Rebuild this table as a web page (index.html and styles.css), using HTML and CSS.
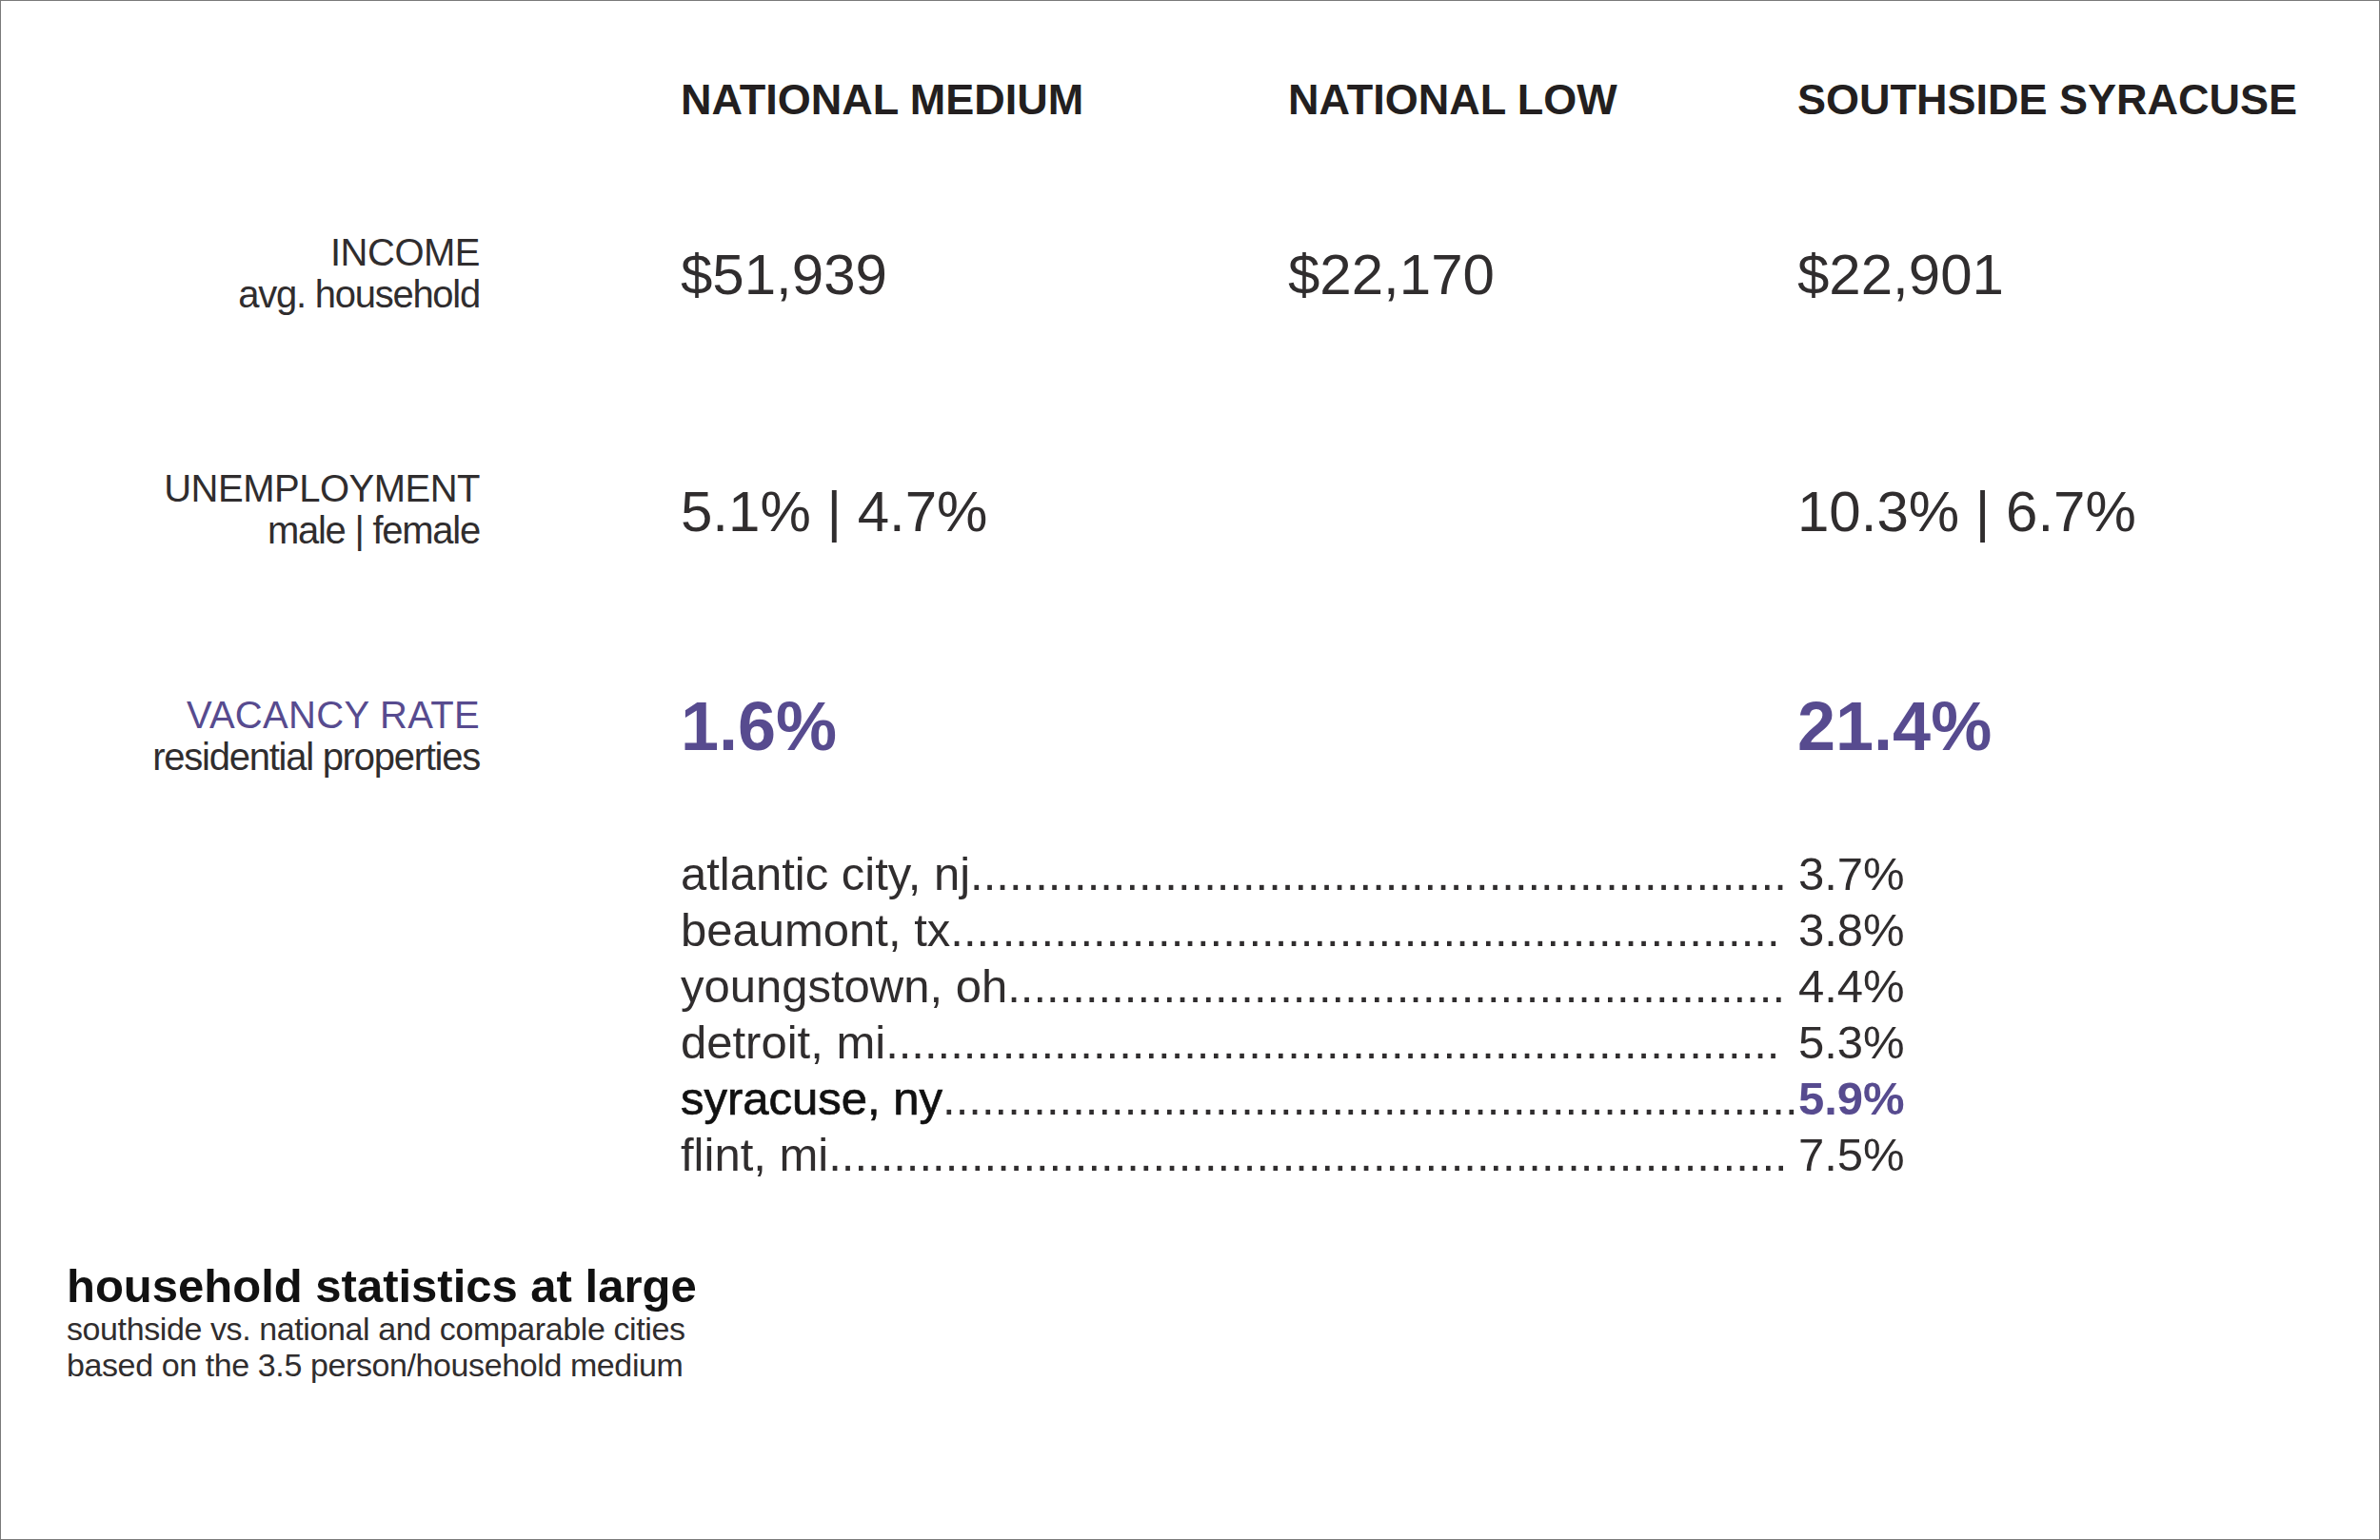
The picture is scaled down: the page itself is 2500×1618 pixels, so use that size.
FILE: index.html
```html
<!DOCTYPE html>
<html lang="en">
<head>
<meta charset="utf-8">
<title>household statistics at large</title>
<link rel="stylesheet" href="styles.css">
</head>
<body>
<div class="page">
  <div class="row head-row">
    <div></div>
    <h2 class="col-head">NATIONAL MEDIUM</h2>
    <h2 class="col-head">NATIONAL LOW</h2>
    <h2 class="col-head">SOUTHSIDE SYRACUSE</h2>
  </div>

  <div class="row stat-row row-income">
    <div class="label">
      <div class="label-title">INCOME</div>
      <div class="label-sub">avg. household</div>
    </div>
    <div class="value">$51,939</div>
    <div class="value">$22,170</div>
    <div class="value">$22,901</div>
  </div>

  <div class="row stat-row row-unemp">
    <div class="label">
      <div class="label-title">UNEMPLOYMENT</div>
      <div class="label-sub">male | female</div>
    </div>
    <div class="value">5.1% | 4.7%</div>
    <div class="value"></div>
    <div class="value">10.3% | 6.7%</div>
  </div>

  <div class="row stat-row row-vacancy">
    <div class="label">
      <div class="label-title accent">VACANCY RATE</div>
      <div class="label-sub">residential properties</div>
    </div>
    <div class="value value-big">1.6%</div>
    <div class="value value-big"></div>
    <div class="value value-big">21.4%</div>
  </div>

  <ul class="cities">
    <li class="city-row"><span class="city-name">atlantic city, nj</span><span class="dots"></span><span class="pct">3.7%</span></li>
    <li class="city-row"><span class="city-name">beaumont, tx</span><span class="dots"></span><span class="pct">3.8%</span></li>
    <li class="city-row"><span class="city-name">youngstown, oh</span><span class="dots"></span><span class="pct">4.4%</span></li>
    <li class="city-row"><span class="city-name">detroit, mi</span><span class="dots"></span><span class="pct">5.3%</span></li>
    <li class="city-row is-current"><span class="city-name">syracuse, ny</span><span class="dots"></span><span class="pct">5.9%</span></li>
    <li class="city-row"><span class="city-name">flint, mi</span><span class="dots"></span><span class="pct">7.5%</span></li>
  </ul>

  <div class="caption">
    <h1 class="caption-title">household statistics at large</h1>
    <p class="caption-sub">southside vs. national and comparable cities</p>
    <p class="caption-sub">based on the 3.5 person/household medium</p>
  </div>
</div>
</body>
</html>
```

FILE: styles.css
```css
html, body {
  margin: 0;
  padding: 0;
  background: #ffffff;
}

body {
  font-family: "Liberation Sans", Arial, Helvetica, sans-serif;
  color: #302d2e;
}

.page {
  box-sizing: border-box;
  width: 2500px;
  height: 1618px;
  border: 1px solid #7a7a7a;
  padding-top: 77px;
  overflow: hidden;
}

.row {
  display: grid;
  grid-template-columns: 714px 638px 535px 1fr;
  align-items: start;
}

/* column headings */
.col-head {
  margin: 0;
  font-size: 45px;
  line-height: 54px;
  font-weight: 700;
  color: #231f20;
  letter-spacing: 0;
  white-space: nowrap;
}

/* stat rows */
.row-income { margin-top: 111px; }
.row-unemp { margin-top: 160px; }
.row-vacancy { margin-top: 148px; }

.label {
  padding-right: 211px;
  text-align: right;
  font-size: 40px;
  line-height: 44px;
  white-space: nowrap;
}

.row-vacancy .label { margin-top: 2px; }

.label-title {
  letter-spacing: -0.5px;
}

.label-title.accent {
  letter-spacing: 0.3px;
}

.label-sub {
  letter-spacing: -1.25px;
}

.accent {
  color: #574b8f;
}

.value {
  margin-top: 16px;
  font-size: 60px;
  line-height: 60px;
  white-space: nowrap;
}

.row-unemp .value { margin-top: 17px; }

.value-big {
  margin-top: 0;
  font-size: 72px;
  line-height: 72px;
  font-weight: 700;
  color: #574b8f;
}

/* comparable cities list */
.cities {
  list-style: none;
  margin: 72px 0 0 714px;
  padding: 0;
  width: 1288px;
}

.city-row {
  display: flex;
  font-size: 49px;
  line-height: 59px;
  white-space: nowrap;
}

.city-name {
  flex: none;
}

.dots {
  flex: 1 1 0;
  min-width: 0;
  overflow: hidden;
  margin-right: 16px;
}

.dots::after {
  content: "........................................................................................................................................................................";
}

.pct {
  flex: none;
  width: 114px;
}

.is-current .city-name {
  color: #111111;
  -webkit-text-stroke: 0.7px #111111;
}

.is-current .dots {
  margin-right: 1px;
}

.is-current .pct {
  color: #574b8f;
  font-weight: 700;
}

/* caption */
.caption {
  margin: 82px 0 0 69px;
}

.caption-title {
  margin: 0;
  font-size: 49px;
  line-height: 52px;
  font-weight: 700;
  color: #111111;
}

.caption-sub {
  margin: 0;
  font-size: 34px;
  line-height: 38px;
  letter-spacing: -0.4px;
}
```
